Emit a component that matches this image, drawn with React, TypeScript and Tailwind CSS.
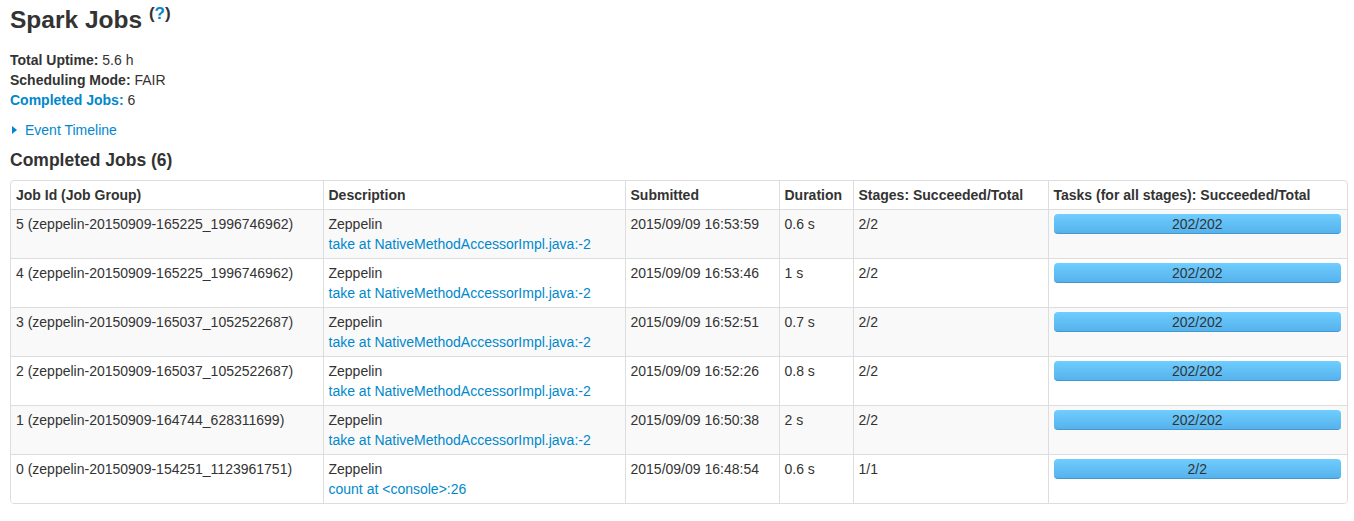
import React from 'react';

type Job = {
    id: string;
    desc: string;
    submitted: string;
    duration: string;
    stages: string;
    tasks: string;
};

const JOBS: Job[] = [
    { id: '5 (zeppelin-20150909-165225_1996746962)', desc: 'take at NativeMethodAccessorImpl.java:-2', submitted: '2015/09/09 16:53:59', duration: '0.6 s', stages: '2/2', tasks: '202/202' },
    { id: '4 (zeppelin-20150909-165225_1996746962)', desc: 'take at NativeMethodAccessorImpl.java:-2', submitted: '2015/09/09 16:53:46', duration: '1 s', stages: '2/2', tasks: '202/202' },
    { id: '3 (zeppelin-20150909-165037_1052522687)', desc: 'take at NativeMethodAccessorImpl.java:-2', submitted: '2015/09/09 16:52:51', duration: '0.7 s', stages: '2/2', tasks: '202/202' },
    { id: '2 (zeppelin-20150909-165037_1052522687)', desc: 'take at NativeMethodAccessorImpl.java:-2', submitted: '2015/09/09 16:52:26', duration: '0.8 s', stages: '2/2', tasks: '202/202' },
    { id: '1 (zeppelin-20150909-164744_628311699)', desc: 'take at NativeMethodAccessorImpl.java:-2', submitted: '2015/09/09 16:50:38', duration: '2 s', stages: '2/2', tasks: '202/202' },
    { id: '0 (zeppelin-20150909-154251_1123961751)', desc: 'count at <console>:26', submitted: '2015/09/09 16:48:54', duration: '0.6 s', stages: '1/1', tasks: '2/2' },
];

const HEADERS = [
    { label: 'Job Id (Job Group)', w: 'w-[312px]' },
    { label: 'Description', w: 'w-[302px]' },
    { label: 'Submitted', w: 'w-[154px]' },
    { label: 'Duration', w: 'w-[74px]' },
    { label: 'Stages: Succeeded/Total', w: 'w-[195px]' },
    { label: 'Tasks (for all stages): Succeeded/Total', w: 'w-[301px]' },
];

const ProgressBar = ({ label }: { label: string }) => (
    <div className="h-[20px] mr-[3px] rounded-[4px] bg-gradient-to-b from-[#6fcdff] to-[#56b2ec] border-b border-[#4398d0] flex items-center justify-center text-[14px] leading-[20px] text-[#333]">
        {label}
    </div>
);

export default function App() {
    return (
        <div className="min-h-[521px] bg-white px-[10px] text-[14px] leading-[20px] text-[#333] font-['Liberation_Sans',Arial,sans-serif]">
            <h3 className="text-[24.5px] leading-[40px] font-bold m-0 mb-[10px]">
                Spark Jobs{' '}
                <sup className="text-[17px] font-bold relative top-[-9px]">
                    (<span className="text-[#0088cc]">?</span>)
                </sup>
            </h3>
            <ul>
                <li><strong>Total Uptime:</strong> 5.6 h</li>
                <li><strong>Scheduling Mode:</strong> FAIR</li>
                <li><strong className="text-[#0088cc]">Completed Jobs:</strong> 6</li>
            </ul>
            <div className="mt-[10px] flex items-center text-[#0088cc]">
                <span className="w-0 h-0 ml-[2px] mr-[8px] border-y-[4px] border-y-transparent border-l-[5px] border-l-[#0088cc]" />
                Event Timeline
            </div>
            <h4 className="mt-[10px] text-[17.5px] leading-[20px] font-bold">Completed Jobs (6)</h4>
            <div className="mt-[10px] w-[1338px] border border-[#dddddd] rounded-[4px] overflow-hidden">
                <table className="w-full table-fixed border-collapse">
                    <thead>
                        <tr>
                            {HEADERS.map((h, i) => (
                                <th
                                    key={h.label}
                                    className={`${h.w} text-left font-bold px-[5px] py-[4px] align-top ${i > 0 ? 'border-l border-[#dddddd]' : ''}`}
                                >
                                    {h.label}
                                </th>
                            ))}
                        </tr>
                    </thead>
                    <tbody>
                        {JOBS.map((j, r) => (
                            <tr key={j.id} className={r % 2 === 0 ? 'bg-[#f9f9f9]' : 'bg-white'}>
                                <td className="px-[5px] py-[4px] align-top border-t border-[#dddddd]">{j.id}</td>
                                <td className="px-[5px] py-[4px] align-top border-t border-l border-[#dddddd]">
                                    <div>Zeppelin</div>
                                    <div className="text-[#0088cc]">{j.desc}</div>
                                </td>
                                <td className="px-[5px] py-[4px] align-top border-t border-l border-[#dddddd]">{j.submitted}</td>
                                <td className="px-[5px] py-[4px] align-top border-t border-l border-[#dddddd]">{j.duration}</td>
                                <td className="px-[5px] py-[4px] align-top border-t border-l border-[#dddddd]">{j.stages}</td>
                                <td className="px-[5px] py-[4px] align-top border-t border-l border-[#dddddd]">
                                    <ProgressBar label={j.tasks} />
                                </td>
                            </tr>
                        ))}
                    </tbody>
                </table>
            </div>
        </div>
    );
}
